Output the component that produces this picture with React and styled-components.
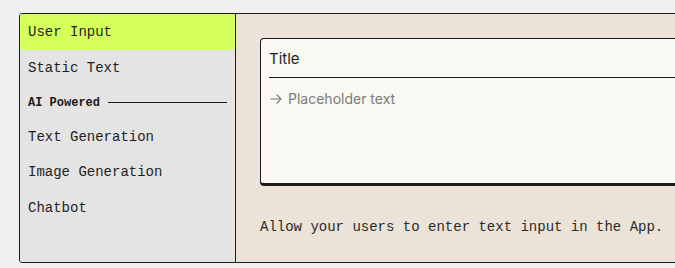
import React from "react";
import styled, { createGlobalStyle } from "styled-components";

const Global = createGlobalStyle`
  html, body { margin: 0; padding: 0; background: #f0f0f0; overflow: hidden; }
  body { width: 675px; height: 268px; }
`;

const Page = styled.div`
  padding: 13px 0 0 19px;
  width: 656px;
  overflow: hidden;
`;

const Frame = styled.div`
  display: flex;
  width: 740px;
  height: 248px;
  border: 1px solid #1b1b1b;
  border-radius: 3px;
  overflow: hidden;
  background: #e4e4e4;
`;

const Sidebar = styled.nav`
  width: 215px;
  flex-shrink: 0;
  display: flex;
  flex-direction: column;
  background: #e4e4e4;
  border-right: 1px solid #1b1b1b;
`;

const Item = styled.div`
  height: 35.5px;
  box-sizing: border-box;
  flex-shrink: 0;
  display: flex;
  align-items: center;
  padding: ${(p) => (p.$active ? "0" : "2px")} 0 0 8px;
  font-family: "Liberation Mono", "DejaVu Sans Mono", monospace;
  font-size: 14px;
  color: #1f1f1f;
  background: ${(p) => (p.$active ? "#d5ff5a" : "transparent")};
  border-radius: ${(p) => (p.$active ? "0 0 4px 4px" : "0")};
`;

const Section = styled.div`
  height: 33px;
  box-sizing: border-box;
  flex-shrink: 0;
  display: flex;
  align-items: center;
  gap: 8px;
  padding: 2px 8px 0;
  font-family: "Liberation Mono", "DejaVu Sans Mono", monospace;
  font-size: 12px;
  font-weight: bold;
  color: #1b1b1b;
  &::after {
    content: "";
    flex: 1;
    height: 1px;
    background: #1b1b1b;
  }
`;

const Main = styled.main`
  flex: 1;
  background: #ebe3d8;
  padding: 24px 0 0 24px;
  display: flex;
  flex-direction: column;
`;

const Card = styled.div`
  width: 480px;
  height: 144px;
  background: #f9f8f3;
  border: 1px solid #1b1b1b;
  border-bottom-width: 3px;
  border-radius: 4px;
  padding: 0 0 0 8px;
  box-sizing: content-box;
`;

const TitleRow = styled.div`
  height: 37px;
  display: flex;
  align-items: center;
  border-bottom: 1.5px solid #1b1b1b;
  font-family: Inter, "Noto Sans", sans-serif;
  font-size: 15px;
  color: #1e1e1e;
  padding-top: 1px;
`;

const Placeholder = styled.div`
  margin-top: 12px;
  display: flex;
  align-items: center;
  gap: 6px;
  padding-left: 1px;
  font-family: Inter, "Noto Sans", sans-serif;
  font-size: 14px;
  color: #7b7b78;
`;

const Description = styled.p`
  margin: 33px 0 0 0;
  font-family: "Liberation Mono", "DejaVu Sans Mono", monospace;
  font-size: 14px;
  color: #2a2a2a;
`;

const Arrow = () => (
  <svg width="12" height="12" viewBox="0 0 12 12" fill="none" stroke="#7b7b78" strokeWidth="1.1">
    <path d="M0.5 6 H11 M6.5 1.5 L11 6 L6.5 10.5" />
  </svg>
);

export default function App() {
  return (
    <Page>
      <Global />
      <Frame>
        <Sidebar>
          <Item $active>User Input</Item>
          <Item>Static Text</Item>
          <Section>AI Powered</Section>
          <Item>Text Generation</Item>
          <Item>Image Generation</Item>
          <Item>Chatbot</Item>
        </Sidebar>
        <Main>
          <Card>
            <TitleRow>Title</TitleRow>
            <Placeholder>
              <Arrow />
              Placeholder text
            </Placeholder>
          </Card>
          <Description>Allow your users to enter text input in the App.</Description>
        </Main>
      </Frame>
    </Page>
  );
}
